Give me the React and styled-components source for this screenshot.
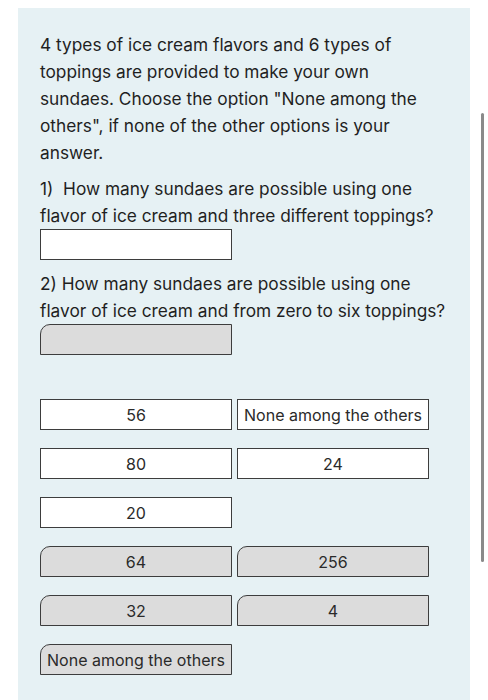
import React from "react";
import styled, { createGlobalStyle } from "styled-components";

const GlobalStyle = createGlobalStyle`
  html, body {
    margin: 0;
    padding: 0;
    background: #ffffff;
  }
  body {
    font-family: Inter, "Liberation Sans", Arial, sans-serif;
    color: #222;
  }
`;

const Page = styled.div`
  position: relative;
  width: 488px;
  height: 700px;
  overflow: hidden;
  padding-top: 8px;
  box-sizing: border-box;
`;

const Panel = styled.div`
  margin-left: 18px;
  width: 452px;
  min-height: 700px;
  background: #e6f1f4;
  box-sizing: border-box;
  padding: 23px 20px 0 22px;
`;

const Text = styled.p`
  margin: ${(p) => p.$top || 0}px 0 0 0;
  max-width: ${(p) => p.$max || "none"};
  font-size: 17.3px;
  line-height: 27px;
  color: #1f1f1f;
`;

const AnswerBox = styled.div`
  width: 192px;
  height: 31px;
  box-sizing: border-box;
  border: 1.5px solid #3d3d3d;
  background: ${(p) => (p.$gray ? "#dcdcdc" : "#ffffff")};
  border-top-left-radius: ${(p) => (p.$gray ? "10px" : "0")};
`;

const Options = styled.div`
  margin-top: 44px;
  display: grid;
  grid-template-columns: 192px 192px;
  column-gap: 5px;
  row-gap: 18px;
`;

const Option = styled.div`
  height: 31px;
  box-sizing: border-box;
  border: 1.5px solid #3d3d3d;
  background: ${(p) => (p.$gray ? "#dcdcdc" : "#ffffff")};
  border-top-left-radius: ${(p) => (p.$gray ? "10px" : "0")};
  display: flex;
  align-items: center;
  justify-content: center;
  font-size: 16px;
  color: #2a2a2a;
  white-space: nowrap;
`;

const Blank = styled.div`
  height: 31px;
`;

const Scrollbar = styled.div`
  position: absolute;
  left: 481px;
  top: 113px;
  width: 3px;
  height: 449px;
  border-radius: 2px;
  background: #8a8a8a;
`;

const options = [
  { label: "56" },
  { label: "None among the others" },
  { label: "80" },
  { label: "24" },
  { label: "20" },
  null,
  { label: "64", gray: true },
  { label: "256", gray: true },
  { label: "32", gray: true },
  { label: "4", gray: true },
  { label: "None among the others", gray: true },
  null,
];

export default function App() {
  return (
    <Page>
      <GlobalStyle />
      <Panel>
        <Text $max="385px">
          4 types of ice cream flavors and 6 types of toppings are provided to
          make your own sundaes. Choose the option "None among the others", if
          none of the other options is your answer.
        </Text>
        <Text $top={9}>
          1)&nbsp; How many sundaes are possible using one flavor of ice cream
          and three different toppings?
        </Text>
        <AnswerBox />
        <Text $top={10}>
          2) How many sundaes are possible using one flavor of ice cream and
          from zero to six toppings?
        </Text>
        <AnswerBox $gray />
        <Options>
          {options.map((o, i) =>
            o ? (
              <Option key={i} $gray={o.gray}>
                {o.label}
              </Option>
            ) : (
              <Blank key={i} />
            )
          )}
        </Options>
      </Panel>
      <Scrollbar />
    </Page>
  );
}
